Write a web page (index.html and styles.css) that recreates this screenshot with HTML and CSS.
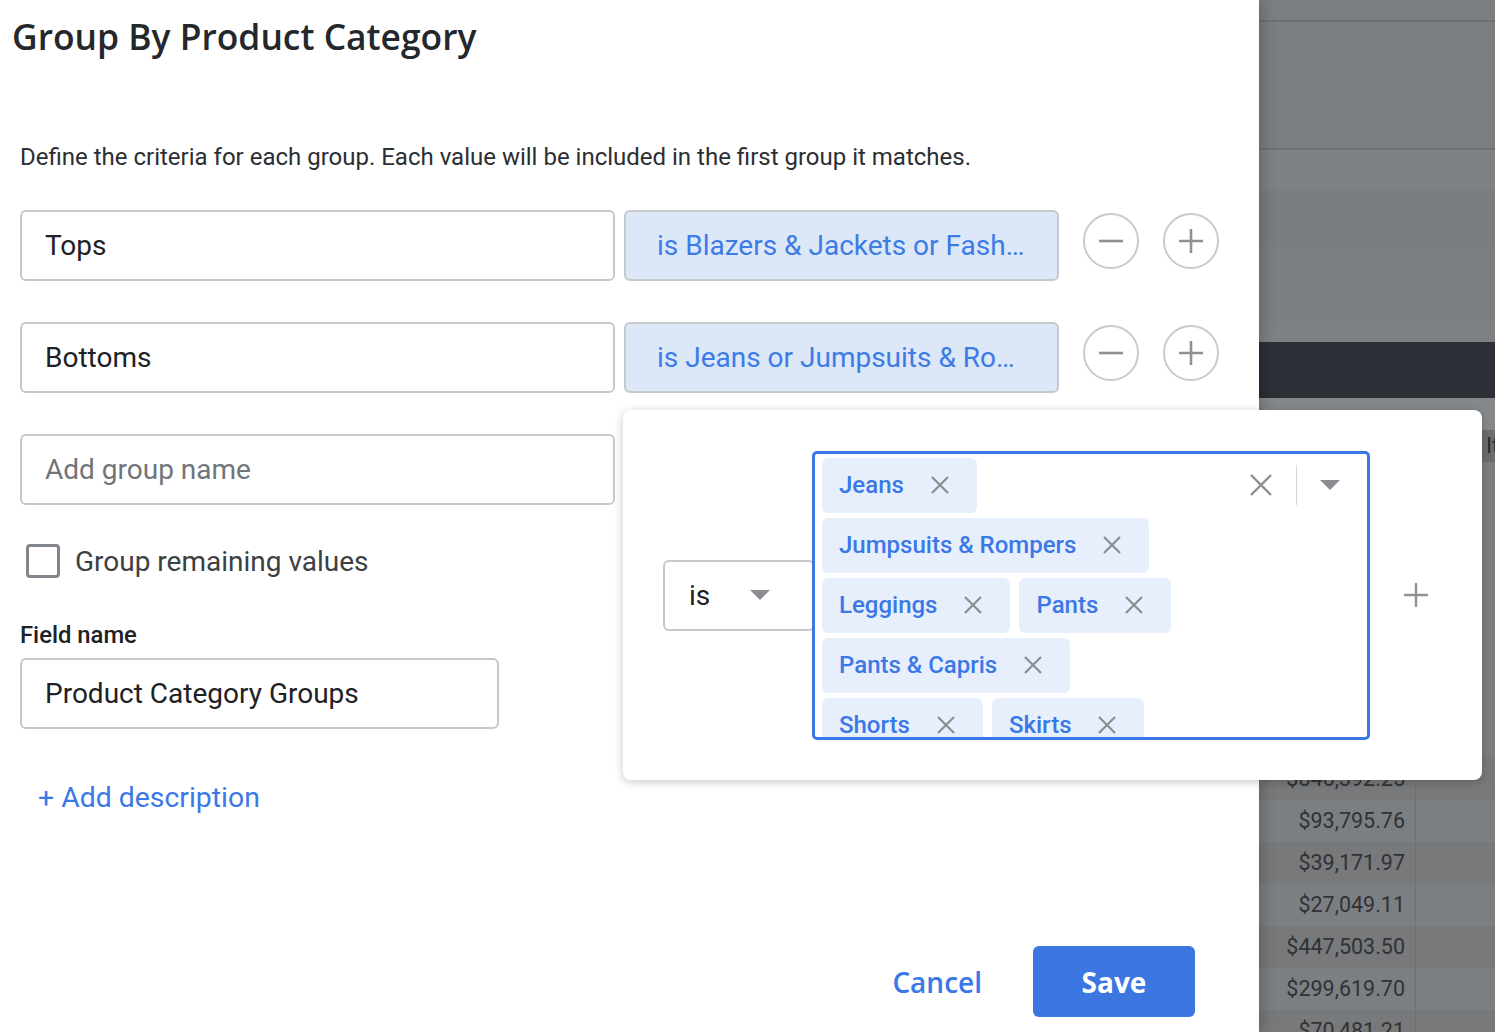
FILE: index.html
```html
<!DOCTYPE html>
<html lang="en">
<head>
<meta charset="utf-8">
<title>Group By Product Category</title>
<link rel="stylesheet" href="styles.css">
</head>
<body>
<div class="page">
  <section class="dialog">
    <h1 class="title">Group By Product Category</h1>
    <p class="desc">Define the criteria for each group. Each value will be included in the first group it matches.</p>

    <div class="groups">
      <div class="group-row">
        <div class="field">Tops</div>
        <div class="criteria">is Blazers &amp; Jackets or Fash…</div>
        <button class="circle" aria-label="Remove group">
          <svg width="26" height="26" viewBox="0 0 26 26"><path d="M1 13h24" stroke="#8e9195" stroke-width="2.6" fill="none"/></svg>
        </button>
        <button class="circle" aria-label="Add group">
          <svg width="26" height="26" viewBox="0 0 26 26"><path d="M1 13h24M13 1v24" stroke="#8e9195" stroke-width="2.6" fill="none"/></svg>
        </button>
      </div>
      <div class="group-row">
        <div class="field">Bottoms</div>
        <div class="criteria">is Jeans or Jumpsuits &amp; Ro…</div>
        <button class="circle" aria-label="Remove group">
          <svg width="26" height="26" viewBox="0 0 26 26"><path d="M1 13h24" stroke="#8e9195" stroke-width="2.6" fill="none"/></svg>
        </button>
        <button class="circle" aria-label="Add group">
          <svg width="26" height="26" viewBox="0 0 26 26"><path d="M1 13h24M13 1v24" stroke="#8e9195" stroke-width="2.6" fill="none"/></svg>
        </button>
      </div>
      <div class="group-row">
        <div class="field placeholder">Add group name</div>
      </div>
    </div>

    <label class="check-row"><span class="checkbox"></span>Group remaining values</label>

    <div class="label">Field name</div>
    <div class="field field-name">Product Category Groups</div>

    <a class="add-desc">+ Add description</a>

    <div class="footer">
      <button class="cancel">Cancel</button>
      <button class="save">Save</button>
    </div>
  </section>

  <aside class="backdrop">
    <div class="band b-top"></div>
    <div class="band b-head"></div>
    <div class="band b-a"></div>
    <div class="band b-b"></div>
    <div class="band b-c"></div>
    <div class="band b-d"></div>
    <div class="band b-dark"></div>
    <div class="band b-light"></div>
    <div class="band b-colhead"><span>Item Name</span></div>
    <div class="band b-hidden"></div>
    <div class="trow dark"><div class="num">$846,392.25</div><div class="cell"></div></div>
    <div class="trow"><div class="num">$93,795.76</div><div class="cell"></div></div>
    <div class="trow dark"><div class="num">$39,171.97</div><div class="cell"></div></div>
    <div class="trow"><div class="num">$27,049.11</div><div class="cell"></div></div>
    <div class="trow dark"><div class="num">$447,503.50</div><div class="cell"></div></div>
    <div class="trow"><div class="num">$299,619.70</div><div class="cell"></div></div>
    <div class="trow dark"><div class="num">$70,481.21</div><div class="cell"></div></div>
  </aside>

  <div class="popover">
    <div class="op-select">
      <span>is</span>
      <svg class="caret" width="20" height="10" viewBox="0 0 20 10"><path d="M0 0h20L10 10z" fill="#8a8d91"/></svg>
    </div>
    <div class="values">
      <div class="chips">
        <span class="chip">Jeans<svg width="18" height="18" viewBox="0 0 18 18"><path d="M1 1l16 16M17 1L1 17" stroke="#8a8d91" stroke-width="2.2"/></svg></span>
        <span class="chip">Jumpsuits &amp; Rompers<svg width="18" height="18" viewBox="0 0 18 18"><path d="M1 1l16 16M17 1L1 17" stroke="#8a8d91" stroke-width="2.2"/></svg></span>
        <span class="chip">Leggings<svg width="18" height="18" viewBox="0 0 18 18"><path d="M1 1l16 16M17 1L1 17" stroke="#8a8d91" stroke-width="2.2"/></svg></span>
        <span class="chip">Pants<svg width="18" height="18" viewBox="0 0 18 18"><path d="M1 1l16 16M17 1L1 17" stroke="#8a8d91" stroke-width="2.2"/></svg></span>
        <span class="chip">Pants &amp; Capris<svg width="18" height="18" viewBox="0 0 18 18"><path d="M1 1l16 16M17 1L1 17" stroke="#8a8d91" stroke-width="2.2"/></svg></span>
        <span class="chip">Shorts<svg width="18" height="18" viewBox="0 0 18 18"><path d="M1 1l16 16M17 1L1 17" stroke="#8a8d91" stroke-width="2.2"/></svg></span>
        <span class="chip">Skirts<svg width="18" height="18" viewBox="0 0 18 18"><path d="M1 1l16 16M17 1L1 17" stroke="#8a8d91" stroke-width="2.2"/></svg></span>
      </div>
      <div class="box-controls">
        <svg width="22" height="22" viewBox="0 0 22 22"><path d="M1 1l20 20M21 1L1 21" stroke="#8a8d91" stroke-width="2.4"/></svg>
        <span class="divider"></span>
        <svg width="20" height="10" viewBox="0 0 20 10"><path d="M0 0h20L10 10z" fill="#8a8d91"/></svg>
      </div>
    </div>
    <svg class="add-cond" width="24" height="24" viewBox="0 0 24 24"><path d="M0 12h24M12 0v24" stroke="#8e9195" stroke-width="2.4" fill="none"/></svg>
  </div>
</div>
</body>
</html>
```

FILE: styles.css
```css
html, body {
  margin: 0;
  padding: 0;
}

body {
  font-family: Roboto, "Liberation Sans", Arial, sans-serif;
  color: #202124;
}

button {
  font-family: inherit;
  cursor: pointer;
}

.page {
  position: relative;
  display: flex;
  width: 1495px;
  height: 1032px;
  overflow: hidden;
}

/* ---------- dialog ---------- */
.dialog {
  position: relative;
  z-index: 1;
  flex: none;
  width: 1259px;
  height: 1032px;
  box-sizing: border-box;
  padding: 0 64px 15px 20px;
  display: flex;
  flex-direction: column;
  background: #fff;
  box-shadow: 3px 0 14px rgba(0, 0, 0, 0.22);
}

.title {
  margin: 0 0 0 -8px;
  padding-top: 14px;
  font-family: "Open Sans", "Liberation Sans", sans-serif;
  font-weight: 600;
  font-size: 35.4px;
  line-height: 44px;
  color: #24272b;
}

.desc {
  margin: 84px 0 0;
  font-size: 24px;
  line-height: 30px;
  color: #2b2e32;
}

.groups {
  margin-top: 38px;
  display: flex;
  flex-direction: column;
  gap: 41px;
}

.group-row {
  display: flex;
  align-items: flex-start;
  height: 71px;
}

.field {
  flex: none;
  width: 595px;
  height: 71px;
  box-sizing: border-box;
  border: 2px solid #c6c9cc;
  border-radius: 6px;
  padding-left: 23px;
  display: flex;
  align-items: center;
  font-size: 28px;
  color: #202124;
}

.field.placeholder {
  color: #70757a;
}

.criteria {
  flex: none;
  margin-left: 9px;
  width: 435px;
  height: 71px;
  box-sizing: border-box;
  border: 2px solid #c6c9cc;
  border-radius: 6px;
  background: #dce7f8;
  padding-left: 31px;
  display: flex;
  align-items: center;
  font-size: 28px;
  color: #3d7be6;
  white-space: nowrap;
  overflow: hidden;
}

.circle {
  flex: none;
  margin: 3px 0 0 24px;
  width: 56px;
  height: 56px;
  box-sizing: border-box;
  border: 2px solid #c8cbce;
  border-radius: 50%;
  background: #fff;
  padding: 0;
  display: flex;
  align-items: center;
  justify-content: center;
}

.check-row {
  margin-top: 39px;
  height: 34px;
  padding-left: 6px;
  display: flex;
  align-items: center;
  gap: 15px;
  font-size: 28px;
  color: #3c4043;
}

.checkbox {
  flex: none;
  width: 34px;
  height: 34px;
  box-sizing: border-box;
  border: 3px solid #80868b;
  border-radius: 4px;
}

.label {
  margin-top: 44px;
  font-size: 23.8px;
  line-height: 26px;
  font-weight: 500;
  color: #202124;
}

.field.field-name {
  margin-top: 10px;
  width: 479px;
}

.add-desc {
  margin-top: 52px;
  padding-left: 18px;
  font-size: 28.4px;
  line-height: 34px;
  color: #3b78e7;
}

.footer {
  margin-top: auto;
  display: flex;
  justify-content: flex-end;
  align-items: center;
  gap: 51px;
}

.cancel {
  border: 0;
  background: none;
  padding: 0;
  font-family: "Open Sans", "Liberation Sans", sans-serif;
  font-weight: 600;
  font-size: 28px;
  color: #3b78e7;
}

.save {
  width: 162px;
  height: 71px;
  border: 0;
  border-radius: 6px;
  background: #3b76e1;
  color: #fff;
  font-family: "Open Sans", "Liberation Sans", sans-serif;
  font-weight: 700;
  font-size: 28px;
}

/* ---------- dimmed background ---------- */
.backdrop {
  flex: 1;
  display: flex;
  flex-direction: column;
  background: #7b7e81;
}

.band { flex: none; }
.b-top { height: 20px; background: #7c7f82; border-bottom: 2px solid #6e7174; }
.b-head { height: 126px; background: #7b7e81; border-bottom: 2px solid #6f7275; }
.b-a { height: 40px; background: #7e8184; }
.b-b { height: 56px; background: #7a7d80; }
.b-c { height: 76px; background: #7c7f82; }
.b-d { height: 20px; background: #7e8184; }
.b-dark { height: 56px; background: #2c2f36; }
.b-light { height: 32px; background: #85888b; }
.b-colhead {
  height: 32px;
  background: #6d6e6c;
  padding-left: 227px;
  font-size: 22px;
  line-height: 32px;
  color: #2a2b2c;
  white-space: nowrap;
  overflow: hidden;
}
.b-hidden { height: 296px; background: #7b7e81; }

.trow {
  flex: none;
  display: flex;
  height: 42px;
  background: #7c7f82;
}
.trow.dark { background: #77797b; }

.num {
  width: 157px;
  box-sizing: border-box;
  padding-right: 10px;
  border-right: 1px solid #6f7174;
  text-align: right;
  font-size: 21.5px;
  line-height: 42px;
  color: #303235;
}

.cell { flex: 1; }

/* ---------- condition popover ---------- */
.popover {
  position: absolute;
  z-index: 2;
  left: 623px;
  top: 410px;
  width: 859px;
  height: 370px;
  box-sizing: border-box;
  padding-left: 40px;
  display: flex;
  align-items: center;
  background: #fff;
  border-radius: 8px;
  box-shadow: 0 2px 10px rgba(0, 0, 0, 0.22);
}

.op-select {
  flex: none;
  width: 152px;
  height: 71px;
  box-sizing: border-box;
  margin-right: -3px;
  border: 2px solid #c6c9cc;
  border-radius: 6px;
  padding-left: 24px;
  display: flex;
  align-items: center;
  gap: 40px;
  font-size: 28px;
  color: #202124;
}

.values {
  position: relative;
  z-index: 1;
  flex: none;
  width: 558px;
  height: 289px;
  box-sizing: border-box;
  border: 3px solid #3b78e7;
  border-radius: 5px;
  background: #fff;
  padding: 4px 27px 0 7px;
  display: flex;
  align-items: flex-start;
  overflow: hidden;
}

.chips {
  width: 410px;
  flex: none;
  display: flex;
  flex-wrap: wrap;
  align-content: flex-start;
  gap: 5px 9px;
}

.chip {
  height: 55px;
  box-sizing: border-box;
  padding: 0 28px 0 17px;
  display: flex;
  align-items: center;
  gap: 27px;
  border-radius: 6px;
  background: #e8effc;
  font-size: 24px;
  font-weight: 500;
  color: #3b78e7;
  white-space: nowrap;
}

.chip svg { flex: none; }

.box-controls {
  margin-left: auto;
  height: 55px;
  display: flex;
  align-items: center;
  gap: 24px;
}

.divider {
  width: 1px;
  height: 40px;
  background: #d5d7da;
  margin-right: -1px;
}

.add-cond {
  margin-left: 34px;
  flex: none;
}
```
